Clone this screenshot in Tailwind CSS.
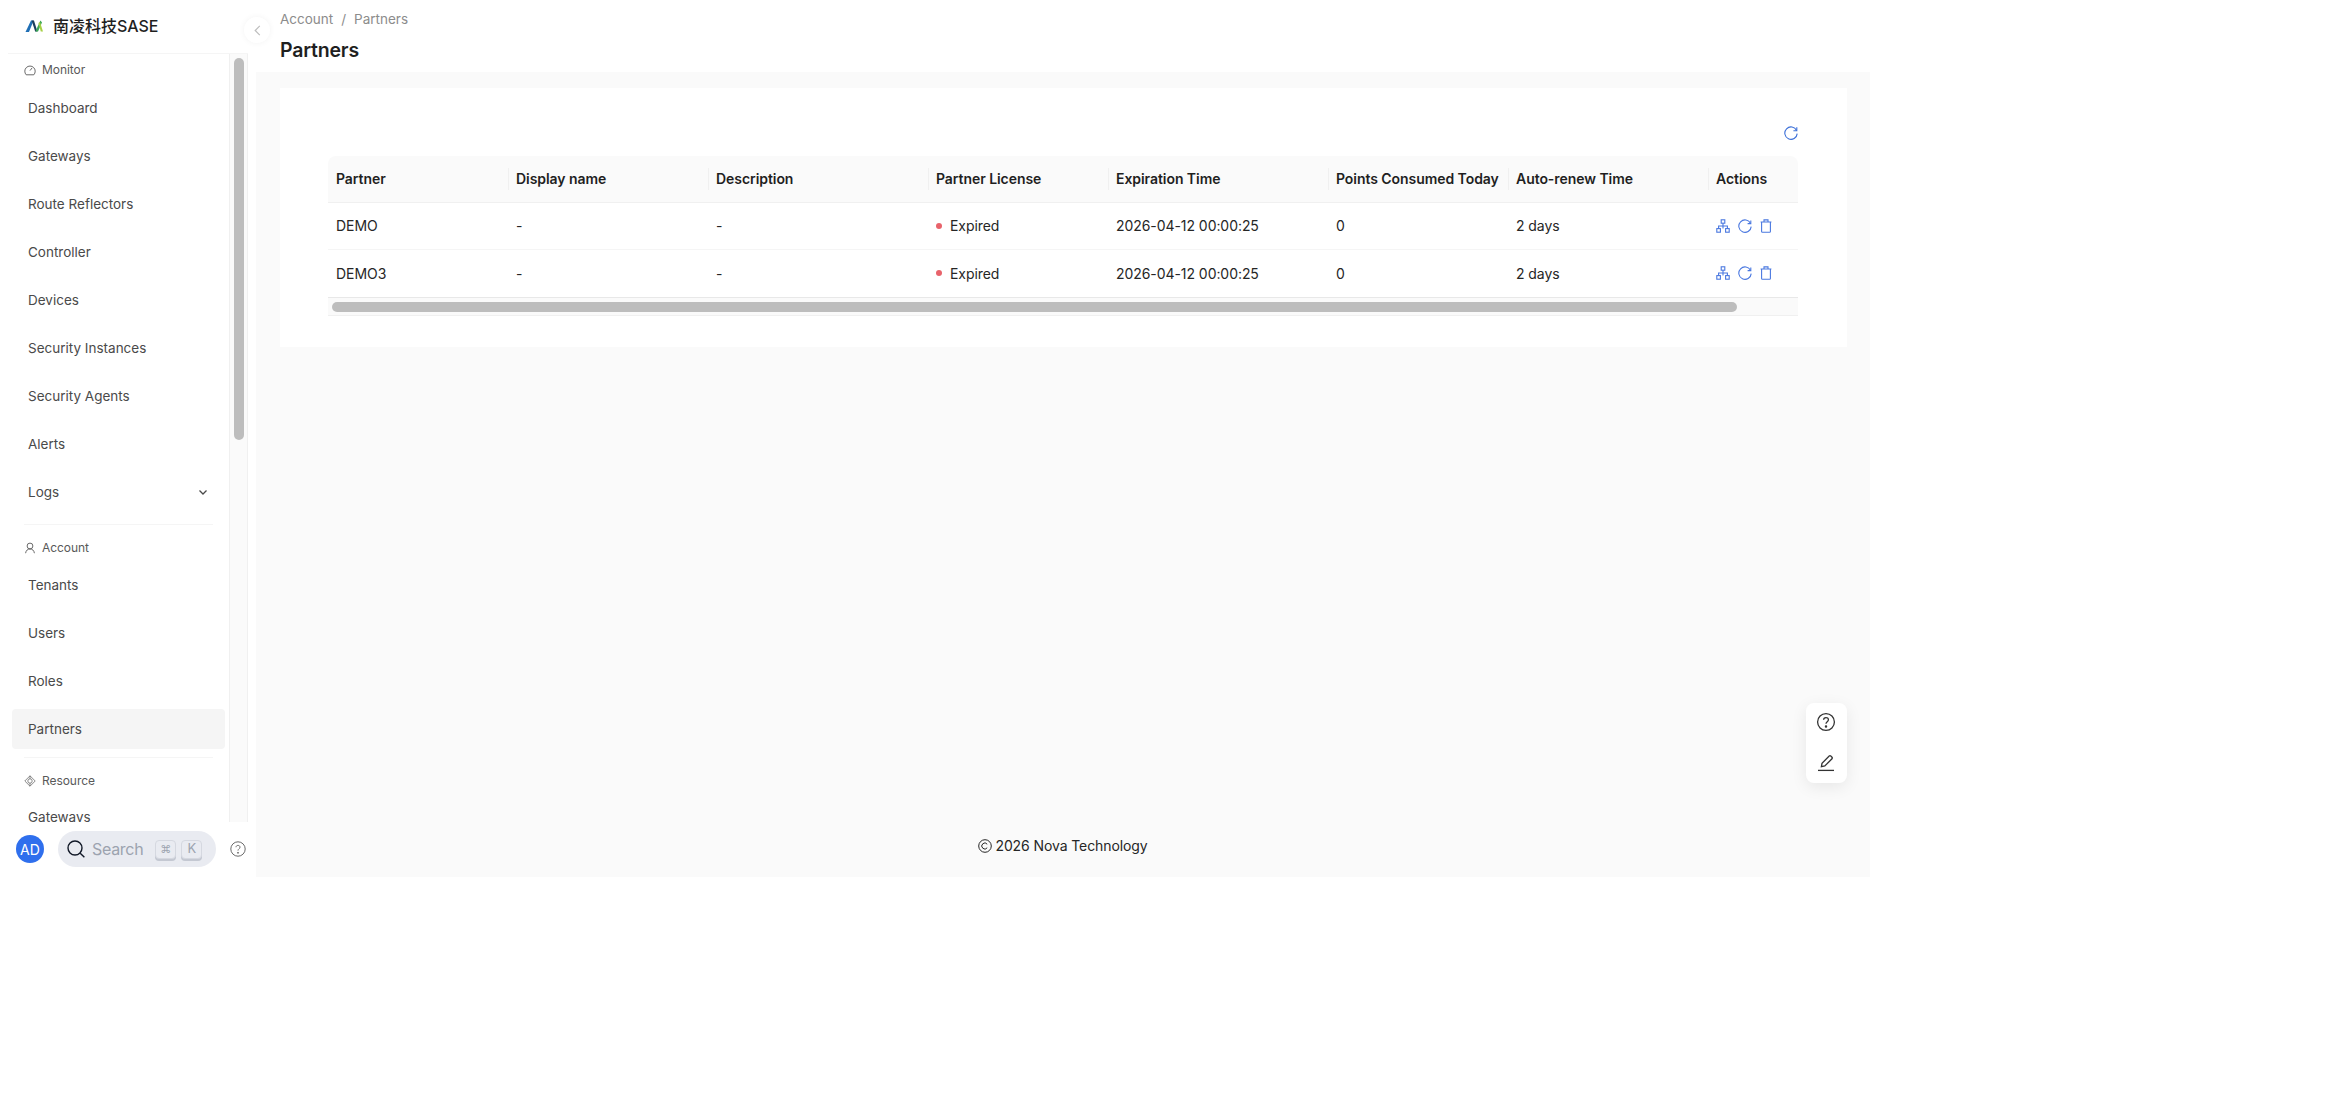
<!DOCTYPE html>
<html lang="en">
<head>
    <meta charset="UTF-8">
    <title>Partners</title>
    <script src="https://cdn.jsdelivr.net/npm/@tailwindcss/browser@4"></script>
</head>
<body class="bg-white font-['Inter','Noto_Sans_CJK_SC',sans-serif] text-[14px] text-[#1f1f1f]">
<div class="relative flex w-[1870px] h-[877px]">

    <!-- sidebar -->
    <aside class="relative flex flex-col w-[256px] shrink-0 bg-white">
        <div class="flex items-center gap-[9px] h-[54px] ml-2 w-[240px] pl-[17px] pb-[1px] border-b border-[#f5f5f5]">
            <svg width="19" height="14" viewBox="0 0 19 14" fill="none">
                <path d="M0.5 13 L6 1.5 L8.6 1.5 L4 13 Z" fill="#1f6fb5"/>
                <path d="M6.6 1.5 L9 1.5 L12.4 12.6 L10.2 12.6 Z" fill="#1c3f5e"/>
                <path d="M10.4 12.6 L15.4 1.5 L17 3.4 L13 12.6 Z" fill="#3aa655"/>
                <path d="M13.4 4 L15 3 L18 12.6 L15.8 12.6 Z" fill="#a6d045"/>
            </svg>
            <span class="text-[16px] font-medium text-[#1f1f1f] leading-none">南凌科技SASE</span>
        </div>

        <div class="flex flex-1 w-[248px] h-[768px] overflow-hidden">
            <nav class="w-[229px] shrink-0 pl-3 pr-[4px] text-[13.5px] text-[#4a4a4a]">
                <div class="flex items-center gap-[6px] h-[32px] mb-[2px] pl-[12px] text-[12px] tracking-[-0.05px] text-[#595959]">
                    <svg width="12" height="12" viewBox="0 0 12 12" fill="none" stroke="currentColor" stroke-width="0.9"><path d="M2.2 10.8 A5.2 5.2 0 1 1 9.8 10.8 Z"/><path d="M6 6.6 L8 4"/></svg>
                    Monitor
                </div>
                <div class="flex flex-col gap-2">
                    <a class="flex items-center h-[40px] pl-[16px]">Dashboard</a>
                    <a class="flex items-center h-[40px] pl-[16px]">Gateways</a>
                    <a class="flex items-center h-[40px] pl-[16px]">Route Reflectors</a>
                    <a class="flex items-center h-[40px] pl-[16px]">Controller</a>
                    <a class="flex items-center h-[40px] pl-[16px]">Devices</a>
                    <a class="flex items-center h-[40px] pl-[16px]">Security Instances</a>
                    <a class="flex items-center h-[40px] pl-[16px]">Security Agents</a>
                    <a class="flex items-center h-[40px] pl-[16px]">Alerts</a>
                    <a class="flex items-center justify-between h-[40px] pl-[16px] pr-[17px]">Logs
                        <svg width="10" height="10" viewBox="0 0 10 10" fill="none" stroke="currentColor" stroke-width="1.3"><path d="M1.5 3.5 L5 7 L8.5 3.5"/></svg>
                    </a>
                </div>
                <div class="h-px mx-3 mt-[12px] bg-[#f5f5f5]"></div>

                <div class="flex items-center gap-[6px] h-[32px] mt-[7px] mb-[1px] pl-[12px] text-[12px] tracking-[-0.05px] text-[#595959]">
                    <svg width="12" height="12" viewBox="0 0 12 12" fill="none" stroke="currentColor" stroke-width="0.9"><circle cx="6" cy="4" r="2.9"/><path d="M1.6 11.2 C2 8.4 3.6 7 6 7 C8.4 7 10 8.4 10.4 11.2"/></svg>
                    Account
                </div>
                <div class="flex flex-col gap-2">
                    <a class="flex items-center h-[40px] pl-[16px]">Tenants</a>
                    <a class="flex items-center h-[40px] pl-[16px]">Users</a>
                    <a class="flex items-center h-[40px] pl-[16px]">Roles</a>
                    <a class="flex items-center h-[40px] pl-[16px] rounded-[4px] bg-[#f5f5f5]">Partners</a>
                </div>
                <div class="h-px mx-3 mt-[8px] bg-[#f5f5f5]"></div>

                <div class="flex items-center gap-[6px] h-[32px] mt-[7px] pl-[12px] text-[12px] tracking-[-0.05px] text-[#595959]">
                    <svg width="12" height="12" viewBox="0 0 12 12" fill="none" stroke="currentColor" stroke-width="0.7"><path d="M6 0.8 L11.2 6 L6 11.2 L0.8 6 Z" stroke-linejoin="round"/><circle cx="6" cy="6" r="2.2"/><path d="M6 0.8 V3.8 M6 8.2 V11.2"/></svg>
                    Resource
                </div>
                <a class="flex items-center h-[40px] pl-[16px]">Gateways</a>
            </nav>
            <div class="w-[19px] h-full bg-[#fafafa] border-x border-[#f0f0f0] pl-[4px] pt-[4px]">
                <div class="w-[10px] h-[382px] rounded-full bg-[#bdbdbd]"></div>
            </div>
        </div>

        <div class="flex items-center h-[55px] pl-4 pb-[1px]">
            <div class="flex items-center justify-center w-[28px] h-[28px] rounded-full bg-[#2f6fed] text-white text-[14px]">AD</div>
            <div class="flex items-center ml-[14px] w-[158px] h-[36px] rounded-full bg-[#e9ebf1] pl-[8px]">
                <svg width="20" height="20" viewBox="0 0 20 20" fill="none" stroke="#111827" stroke-width="1.4"><circle cx="9" cy="9" r="7"/><path d="M14.2 14.2 L18.4 18.2"/></svg>
                <span class="ml-[6px] text-[16px] tracking-[-0.3px] text-[#9ca3af]">Search</span>
                <span class="flex items-center justify-center ml-[12px] w-[21px] h-[19px] rounded-[4px] bg-[#e9ebf1] border border-[#d5d8e0] shadow-[0_2px_0_#c4c8d2] text-[11px] text-[#9ca3af]">⌘</span>
                <span class="flex items-center justify-center ml-[5px] w-[21px] h-[19px] rounded-[4px] bg-[#e9ebf1] border border-[#d5d8e0] shadow-[0_2px_0_#c4c8d2] text-[13px] text-[#9ca3af]">K</span>
            </div>
            <svg class="ml-[14px]" width="16" height="16" viewBox="0 0 16 16" fill="none" stroke="#6b6b6b" stroke-width="1"><circle cx="8" cy="8" r="7.2"/><path d="M6 6.2 C6 3.8 10 3.8 10 6.2 C10 7.8 8 7.8 8 9.6"/><circle cx="8" cy="11.8" r="0.5" fill="#6b6b6b"/></svg>
        </div>

        <button class="absolute left-[244px] top-[17px] flex items-center justify-center w-[26px] h-[26px] rounded-full bg-white shadow-[0_0_6px_rgba(0,0,0,0.05)] text-[#bdbdbd]">
            <svg width="7" height="11" viewBox="0 0 7 11" fill="none" stroke="currentColor" stroke-width="1.2"><path d="M5.8 0.8 L1.2 5.5 L5.8 10.2"/></svg>
        </button>
    </aside>

    <!-- main -->
    <main class="flex flex-col flex-1 bg-[#fafafa]">
        <header class="h-[72px] shrink-0 bg-white pl-6">
            <div class="flex items-center h-[38px] text-[13.5px] text-[#8c8c8c]">
                <span>Account</span><span class="mx-[8px]">/</span><span>Partners</span>
            </div>
            <h1 class="text-[19.5px] font-semibold tracking-[-0.2px] leading-[24px] text-[#1f1f1f]">Partners</h1>
        </header>

        <section class="ml-6 mt-4 w-[1567px] h-[259px] bg-white pl-[48px] pr-[49px]">
            <div class="flex justify-end items-end h-[54px]">
                <svg class="mb-[2px]" width="14" height="14" viewBox="0 0 14 14" fill="none" stroke="#3b6fd8" stroke-width="1.1"><path d="M12.6 4.4 A6.2 6.2 0 1 0 13.2 7.6"/><path d="M12.8 1.2 V4.8 H9.4"/></svg>
            </div>
            <div class="mt-[14px] w-[1470px] overflow-hidden">
                <table class="w-full table-fixed text-left tracking-[-0.06px]">
                    <colgroup>
                        <col class="w-[180px]"><col class="w-[200px]"><col class="w-[220px]"><col class="w-[180px]"><col class="w-[220px]"><col class="w-[180px]"><col class="w-[200px]"><col>
                    </colgroup>
                    <thead class="bg-[#fafafa] text-[14px] font-semibold text-[#1f1f1f]">
                        <tr class="h-[46px] border-b border-[#f0f0f0]">
                            <th class="pl-2 font-semibold rounded-tl-lg">Partner</th>
                            <th class="pl-2 font-semibold"><div class="border-l border-[#f0f0f0] -ml-2 pl-[7px] leading-[22px]">Display name</div></th>
                            <th class="pl-2 font-semibold"><div class="border-l border-[#f0f0f0] -ml-2 pl-[7px] leading-[22px]">Description</div></th>
                            <th class="pl-2 font-semibold"><div class="border-l border-[#f0f0f0] -ml-2 pl-[7px] leading-[22px]">Partner License</div></th>
                            <th class="pl-2 font-semibold"><div class="border-l border-[#f0f0f0] -ml-2 pl-[7px] leading-[22px]">Expiration Time</div></th>
                            <th class="pl-2 font-semibold"><div class="border-l border-[#f0f0f0] -ml-2 pl-[7px] leading-[22px] whitespace-nowrap">Points Consumed Today</div></th>
                            <th class="pl-2 font-semibold"><div class="border-l border-[#f0f0f0] -ml-2 pl-[7px] leading-[22px]">Auto-renew Time</div></th>
                            <th class="pl-2 font-semibold rounded-tr-lg"><div class="border-l border-[#f0f0f0] -ml-2 pl-[7px] leading-[22px]">Actions</div></th>
                        </tr>
                    </thead>
                    <tbody class="text-[#262626]">
                        <tr class="h-[47px] border-b border-[#f5f5f5]">
                            <td class="pl-2">DEMO</td><td class="pl-2">-</td><td class="pl-2">-</td>
                            <td class="pl-2"><span class="flex items-center gap-2"><i class="w-[6px] h-[6px] rounded-full bg-[#e8636b]"></i>Expired</span></td>
                            <td class="pl-2">2026-04-12 00:00:25</td><td class="pl-2">0</td><td class="pl-2">2 days</td>
                            <td class="pl-2">
                                <div class="flex items-center gap-2 text-[#4a78e0]">
                                    <svg width="14" height="14" viewBox="0 0 14 14" fill="none" stroke="currentColor" stroke-width="1.1"><rect x="5.2" y="0.8" width="3.6" height="3.4"/><rect x="0.8" y="9.6" width="3.6" height="3.6"/><rect x="9.6" y="9.6" width="3.6" height="3.6"/><path d="M7 4.2 V9.6 M2.6 9.6 V7 H11.4 V9.6"/></svg>
                                    <svg width="14" height="14" viewBox="0 0 14 14" fill="none" stroke="currentColor" stroke-width="1.1"><path d="M12.6 4.4 A6.2 6.2 0 1 0 13.2 7.6"/><path d="M12.8 1.4 V4.6 H9.6"/></svg>
                                    <svg width="12" height="14" viewBox="0 0 12 14" fill="none" stroke="currentColor" stroke-width="1.1"><path d="M0.6 3 H11.4 M4 3 V0.9 H8 V3"/><path d="M1.6 3 V12.4 Q1.6 13.2 2.4 13.2 H9.6 Q10.4 13.2 10.4 12.4 V3"/></svg>
                                </div>
                            </td>
                        </tr>
                        <tr class="h-[48px] border-b border-[#e8e8e8]">
                            <td class="pl-2">DEMO3</td><td class="pl-2">-</td><td class="pl-2">-</td>
                            <td class="pl-2"><span class="flex items-center gap-2"><i class="w-[6px] h-[6px] rounded-full bg-[#e8636b]"></i>Expired</span></td>
                            <td class="pl-2">2026-04-12 00:00:25</td><td class="pl-2">0</td><td class="pl-2">2 days</td>
                            <td class="pl-2">
                                <div class="flex items-center gap-2 text-[#4a78e0]">
                                    <svg width="14" height="14" viewBox="0 0 14 14" fill="none" stroke="currentColor" stroke-width="1.1"><rect x="5.2" y="0.8" width="3.6" height="3.4"/><rect x="0.8" y="9.6" width="3.6" height="3.6"/><rect x="9.6" y="9.6" width="3.6" height="3.6"/><path d="M7 4.2 V9.6 M2.6 9.6 V7 H11.4 V9.6"/></svg>
                                    <svg width="14" height="14" viewBox="0 0 14 14" fill="none" stroke="currentColor" stroke-width="1.1"><path d="M12.6 4.4 A6.2 6.2 0 1 0 13.2 7.6"/><path d="M12.8 1.4 V4.6 H9.6"/></svg>
                                    <svg width="12" height="14" viewBox="0 0 12 14" fill="none" stroke="currentColor" stroke-width="1.1"><path d="M0.6 3 H11.4 M4 3 V0.9 H8 V3"/><path d="M1.6 3 V12.4 Q1.6 13.2 2.4 13.2 H9.6 Q10.4 13.2 10.4 12.4 V3"/></svg>
                                </div>
                            </td>
                        </tr>
                    </tbody>
                </table>
                <div class="h-[18px] bg-[#fafafa] border-b border-[#f0f0f0] pl-[4px] pt-[4px]">
                    <div class="w-[1405px] h-[10px] rounded-full bg-[#bdbdbd]"></div>
                </div>
            </div>
        </section>

        <footer class="flex items-center justify-center gap-[3px] mt-auto mb-[21px] tracking-[-0.1px] text-[#262626]">
            <svg width="14" height="14" viewBox="0 0 14 14" fill="none" stroke="currentColor" stroke-width="1"><circle cx="7" cy="7" r="6.3"/><path d="M9.2 5.2 A3 3 0 1 0 9.2 8.8"/></svg>
            2026 Nova Technology
        </footer>
    </main>

    <!-- floating buttons -->
    <div class="absolute left-[1806px] top-[703px] flex flex-col items-center gap-[21px] w-[41px] h-[80px] pt-[9px] pr-[1px] rounded-lg bg-white shadow-[0_4px_16px_rgba(0,0,0,0.08)] text-[#333]">
        <svg width="20" height="20" viewBox="0 0 20 20" fill="none" stroke="currentColor" stroke-width="1.3"><circle cx="10" cy="10" r="8.4"/><path d="M7.6 7.8 C7.6 4.8 12.4 4.8 12.4 7.8 C12.4 9.8 10 9.6 10 11.8"/><circle cx="10" cy="14.4" r="0.6" fill="currentColor"/></svg>
        <svg width="20" height="20" viewBox="0 0 20 20" fill="none" stroke="currentColor" stroke-width="1.3"><path d="M5.4 13.6 L6 10.4 L13.2 3 Q14 2.4 14.8 3 L16 4.2 Q16.6 5 16 5.8 L8.8 13 Z"/><path d="M2 17.4 H18"/></svg>
    </div>
</div>
</body>
</html>
